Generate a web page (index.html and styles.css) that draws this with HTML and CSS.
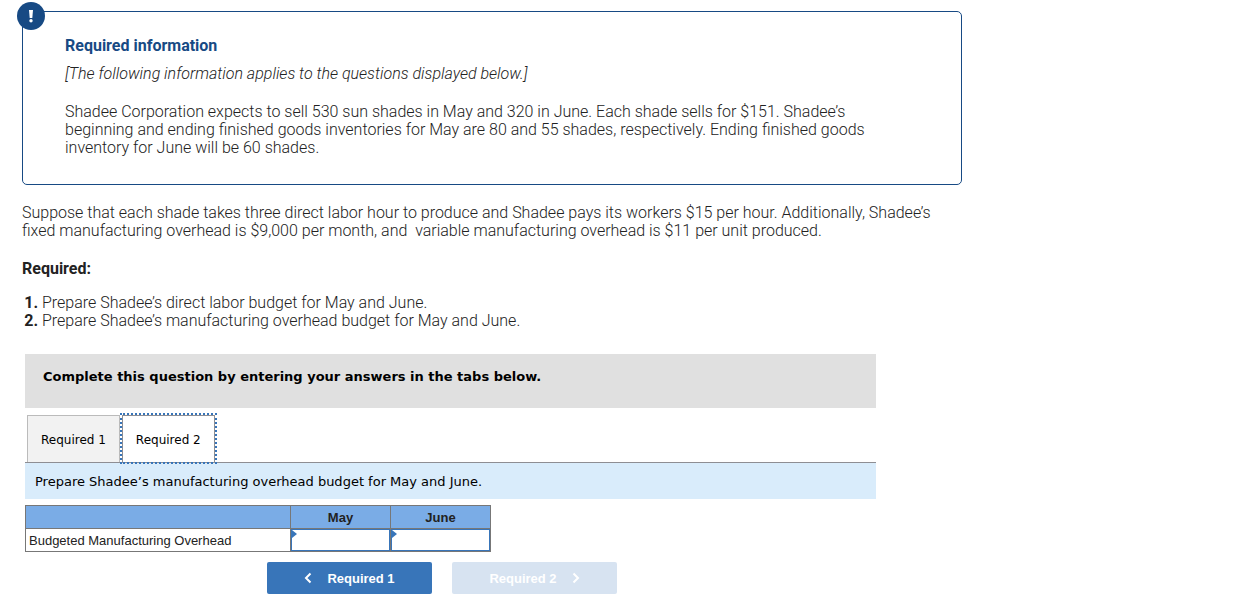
FILE: index.html
```html
<!DOCTYPE html>
<html lang="en">
<head>
    <meta charset="UTF-8">
    <meta name="viewport" content="width=device-width, initial-scale=1.0">
    <title>Budgeted Manufacturing Overhead</title>
    <link rel="stylesheet" href="styles.css">
</head>
<body>
    <main class="question">
        <section class="info-box">
            <span class="info-badge">
                <svg width="28" height="28" viewBox="0 0 28 28" aria-hidden="true">
                    <circle cx="14" cy="14" r="14" fill="#174a84"/>
                    <path d="M12 8h4l-.7 8h-2.600z" fill="#fff"/>
                    <circle cx="14" cy="18.700" r="1.700" fill="#fff"/>
                </svg>
            </span>
            <h2 class="info-title">Required information</h2>
            <p class="info-note">[The following information applies to the questions displayed below.]</p>
            <p>Shadee Corporation expects to sell 530 sun shades in May and 320 in June. Each shade sells for $151. Shadee’s<br>
            beginning and ending finished goods inventories for May are 80 and 55 shades, respectively. Ending finished goods<br>
            inventory for June will be 60 shades.</p>
        </section>

        <div class="prompt">
            <p>Suppose that each shade takes three direct labor hour to produce and Shadee pays its workers $15 per hour. Additionally, Shadee’s<br>
            fixed manufacturing overhead is $9,000 per month, and&nbsp; variable manufacturing overhead is $11 per unit produced.</p>
            <h3 class="prompt-title">Required:</h3>
            <ol class="requirements">
                <li>Prepare Shadee’s direct labor budget for May and June.</li>
                <li>Prepare Shadee’s manufacturing overhead budget for May and June.</li>
            </ol>
        </div>

        <section class="worksheet">
            <p class="instructions">Complete this question by entering your answers in the tabs below.</p>

            <div class="tabs" role="tablist">
                <button class="tab" type="button" role="tab" aria-selected="false">Required 1</button>
                <button class="tab active" type="button" role="tab" aria-selected="true">Required 2</button>
            </div>
            <p class="tab-prompt">Prepare Shadee’s manufacturing overhead budget for May and June.</p>

            <table class="budget">
                <thead>
                    <tr>
                        <th class="label-col"></th>
                        <th class="value-col" id="may">May</th>
                        <th class="value-col" id="june">June</th>
                    </tr>
                </thead>
                <tbody>
                    <tr>
                        <td class="label-cell" id="overhead">Budgeted Manufacturing Overhead</td>
                        <td class="value-cell"><input type="text" aria-labelledby="overhead may"></td>
                        <td class="value-cell"><input type="text" aria-labelledby="overhead june"></td>
                    </tr>
                </tbody>
            </table>

            <div class="nav-buttons">
                <button class="nav-btn" type="button">
                    <svg width="8" height="12" viewBox="0 0 8 12" aria-hidden="true"><path d="M6.500 1.500 2 6l4.500 4.500" fill="none" stroke="currentColor" stroke-width="2"/></svg>
                    Required 1
                </button>
                <button class="nav-btn" type="button" disabled>
                    Required 2
                    <svg width="8" height="12" viewBox="0 0 8 12" aria-hidden="true"><path d="M1.500 1.500 6 6l-4.500 4.500" fill="none" stroke="currentColor" stroke-width="2"/></svg>
                </button>
            </div>
        </section>
    </main>
</body>
</html>
```
FILE: styles.css
```css
:root {
    --navy: #174a84;
    --blue: #3875b9;
    --text: #222;
}

* {
    margin: 0;
    padding: 0;
    box-sizing: border-box;
}

body {
    font-family: Roboto, "Liberation Sans", sans-serif;
    font-size: 16px;
    font-weight: 350;
    line-height: 18px;
    color: var(--text);
    background: #fff;
}

.question {
    max-width: 962px;
    padding: 11px 0 16px 22px;
}

.info-box {
    position: relative;
    border: 1px solid var(--navy);
    border-radius: 5px;
    padding: 25px 42px 27px;
}

.info-badge {
    position: absolute;
    top: -10px;
    left: -6px;
    width: 28px;
    height: 28px;
}

.info-badge svg {
    display: block;
}

.info-title {
    font-size: 16px;
    font-weight: 700;
    color: var(--navy);
    margin-bottom: 10px;
}

.info-note {
    font-style: italic;
    margin-bottom: 20px;
}

.prompt {
    padding: 19px 0 24px;
}

.prompt-title {
    font-size: 16px;
    font-weight: 700;
    margin: 20px 0 16px;
}

.requirements {
    padding-left: 20px;
}

.requirements li::marker {
    font-weight: 700;
}

.worksheet {
    max-width: 854px;
    padding-left: 3px;
    font-family: "DejaVu Sans", sans-serif;
    font-size: 13px;
    font-weight: 400;
    color: #000;
}

.instructions {
    background: #e0e0e0;
    padding: 14px 18px 22px;
    font-weight: 700;
}

.tabs {
    display: flex;
    gap: 2px;
    padding: 7px 2px 0;
    border-bottom: 1px solid #8e8e93;
}

.tab {
    height: 47px;
    padding: 2px 13px 0;
    border: 1px solid #bbb;
    border-bottom: 0;
    background: #f2f2f2;
    font-family: "DejaVu Sans", sans-serif;
    font-size: 12px;
    color: #000;
    cursor: pointer;
}

.tab.active {
    border-color: #8e8e93;
    background: #fff;
    outline: 2px dotted var(--blue);
}

.tab-prompt {
    background: #d9ecfb;
    padding: 11px 10px 9px;
    line-height: 16px;
    margin-bottom: 6px;
}

.budget {
    border-collapse: collapse;
    table-layout: fixed;
    width: 466px;
    font-family: "Liberation Sans", Arial, sans-serif;
    font-size: 13px;
    line-height: 16px;
    color: var(--text);
}

.budget th,
.budget td {
    height: 23px;
    border: 1px solid #777;
}

.budget th {
    background: #7aace6;
    font-weight: 700;
    padding-top: 2px;
}

.value-col {
    width: 100px;
}

.budget .label-cell {
    padding: 2px 3px 0;
}

.value-cell {
    position: relative;
}

.value-cell input {
    display: block;
    width: 100%;
    height: 22px;
    border: 1px solid var(--blue);
    padding: 0 6px;
    font: inherit;
    text-align: right;
    background: #fff;
}

.value-cell::before {
    content: "";
    position: absolute;
    top: 1px;
    left: 1px;
    border: 4px solid transparent;
    border-left: 5px solid var(--blue);
    border-right: 0;
}

.nav-buttons {
    display: flex;
    gap: 20px;
    padding: 10px 0 0 242px;
}

.nav-btn {
    display: flex;
    align-items: center;
    justify-content: center;
    gap: 15px;
    width: 165px;
    height: 32px;
    border: 0;
    border-radius: 2px;
    background: var(--blue);
    color: #fff;
    font-family: "Liberation Sans", Arial, sans-serif;
    font-size: 13px;
    font-weight: 700;
    cursor: pointer;
}

.nav-btn:disabled {
    background: #d7e3f1;
    cursor: default;
}
```
